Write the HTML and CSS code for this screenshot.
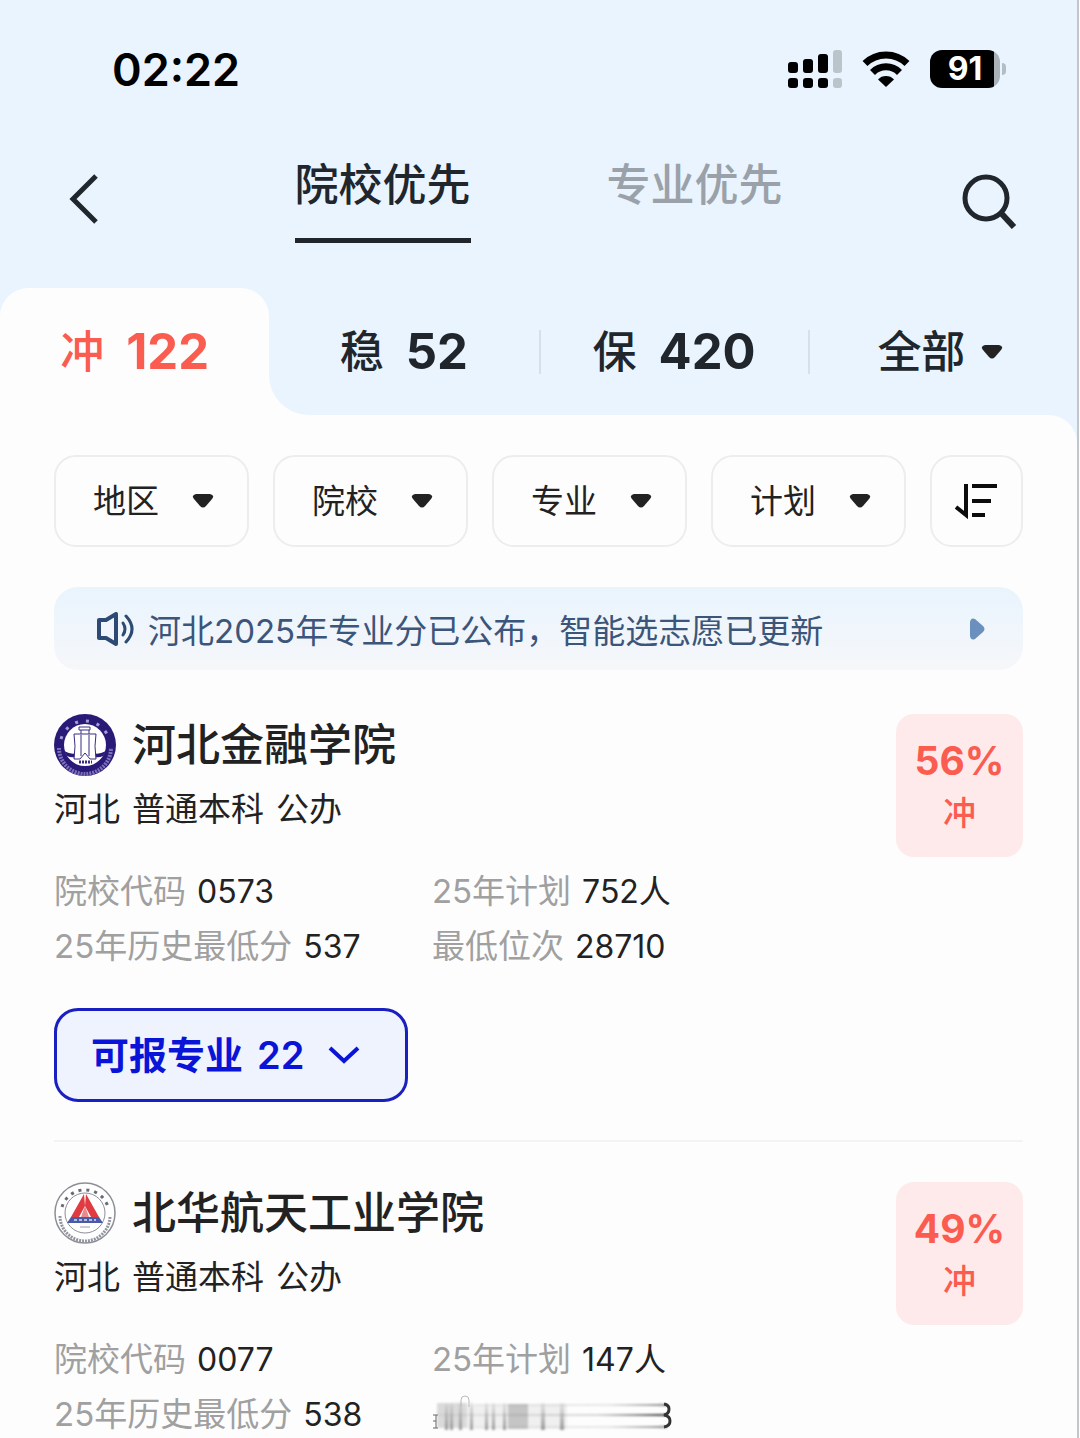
FILE: index.html
```html
<!DOCTYPE html>
<html lang="zh-CN">
<head>
<meta charset="UTF-8">
<meta name="viewport" content="width=device-width, initial-scale=1.0">
<title>智能选志愿</title>
<link rel="stylesheet" href="styles.css">
</head>
<body>
<div class="app">
    <div class="status-bar">
        <span class="time">02:22</span>
        <div class="status-icons">
            <svg class="signal" width="54" height="38" viewBox="0 0 54 38">
                <rect x="0" y="12" width="10" height="11" rx="3"/>
                <rect x="15" y="9" width="10" height="14" rx="3"/>
                <rect x="30" y="4" width="10" height="19" rx="3"/>
                <rect x="0" y="28" width="10" height="10" rx="3"/>
                <rect x="15" y="28" width="10" height="10" rx="3"/>
                <rect x="30" y="28" width="10" height="10" rx="3"/>
                <rect x="45" y="0" width="9" height="23" rx="3" fill="#b9c4cb"/>
                <rect x="45" y="28" width="9" height="10" rx="3" fill="#b9c4cb"/>
            </svg>
            <svg class="wifi" width="48" height="36" viewBox="0 0 48 36">
                <path d="M3 12.500 A30 30 0 0 1 45 12.500" fill="none" stroke="#000" stroke-width="7"/>
                <path d="M10.500 21.500 A19 19 0 0 1 37.500 21.500" fill="none" stroke="#000" stroke-width="7"/>
                <path d="M24 36 L16 28.500 A11 11 0 0 1 32 28.500 Z"/>
            </svg>
            <div class="battery"><span class="battery-level">91</span></div>
        </div>
    </div>

    <header class="nav">
        <button class="icon-btn" aria-label="返回">
            <svg width="30" height="52" viewBox="0 0 30 52"><path d="M28 3 L5 26 L28 49" fill="none" stroke="#20262c" stroke-width="5"/></svg>
        </button>
        <div class="nav-tabs">
            <button class="nav-tab active">院校优先</button>
            <button class="nav-tab">专业优先</button>
        </div>
        <button class="icon-btn search" aria-label="搜索">
            <svg width="56" height="56" viewBox="0 0 56 56" fill="none" stroke="#20262c" stroke-width="5"><circle cx="25" cy="25" r="21"/><path d="M40 40 L53 54" stroke-width="6"/></svg>
        </button>
    </header>

    <div class="levels">
        <button class="level active">冲 <b>122</b></button>
        <div class="level-rest">
            <button class="level">稳 <b>52</b></button>
            <button class="level">保 <b>420</b></button>
            <label class="level-all">
                <select aria-label="全部"><option>全部</option></select>
                <svg class="caret" width="22" height="14" viewBox="0 0 22 14"><path d="M4 0 H18 Q23 1 20 5 L14 12 Q11 15 8 12 L2 5 Q-1 1 4 0 Z"/></svg>
            </label>
        </div>
    </div>

    <main class="content">
        <div class="filters">
            <label class="filter">
                <select aria-label="地区"><option>地区</option></select>
                <svg class="caret" width="22" height="14" viewBox="0 0 22 14"><path d="M4 0 H18 Q23 1 20 5 L14 12 Q11 15 8 12 L2 5 Q-1 1 4 0 Z"/></svg>
            </label>
            <label class="filter">
                <select aria-label="院校"><option>院校</option></select>
                <svg class="caret" width="22" height="14" viewBox="0 0 22 14"><path d="M4 0 H18 Q23 1 20 5 L14 12 Q11 15 8 12 L2 5 Q-1 1 4 0 Z"/></svg>
            </label>
            <label class="filter">
                <select aria-label="专业"><option>专业</option></select>
                <svg class="caret" width="22" height="14" viewBox="0 0 22 14"><path d="M4 0 H18 Q23 1 20 5 L14 12 Q11 15 8 12 L2 5 Q-1 1 4 0 Z"/></svg>
            </label>
            <label class="filter">
                <select aria-label="计划"><option>计划</option></select>
                <svg class="caret" width="22" height="14" viewBox="0 0 22 14"><path d="M4 0 H18 Q23 1 20 5 L14 12 Q11 15 8 12 L2 5 Q-1 1 4 0 Z"/></svg>
            </label>
            <button class="sort" aria-label="排序">
                <svg width="43" height="36" viewBox="0 0 43 36" fill="none" stroke="#0c0c0c" stroke-width="4"><path d="M1 24 L11 32 V1"/><path d="M17 3 H42 M17 18 H36 M17 32 H30"/></svg>
            </button>
        </div>

        <a class="notice" href="#">
            <svg width="38" height="34" viewBox="0 0 38 34" fill="none" stroke="#2c4a74" stroke-width="4" stroke-linejoin="round" stroke-linecap="round"><path d="M3 8 H10 L20 2 V32 L10 26 H3 Z"/><path d="M27 11 Q31 17 27 23" stroke-width="3"/><path d="M30 4 Q42 17 30 30" stroke-width="3"/></svg>
            <span class="notice-text">河北2025年专业分已公布，智能选志愿已更新</span>
            <svg width="15" height="22" viewBox="0 0 15 22"><path d="M0 4 Q1 -1 5 1 L13 8 Q16 11 13 14 L5 21 Q1 23 0 18 Z" fill="#6b90bd"/></svg>
        </a>

        <article class="school">
            <div class="school-head">
                <div>
                    <h2 class="school-name">
                        <svg class="logo" viewBox="0 0 62 62">
                            <circle cx="31" cy="31" r="31" fill="#2a1a78"/>
                            <circle cx="31" cy="31" r="21" fill="#fff"/>
                            <path d="M10 37 Q18 41 22 39 V43 Q17 44 13 42 Z M52 37 Q44 41 40 39 V43 Q45 44 49 42 Z" fill="#2a1a78"/>
                            <path d="M25 13 H36 V16 H35 V20 H42 Q40 32 42 45 H36 L31 39 L26 45 H20 Q22 32 20 20 H27 V16 H25 Z" fill="#fff" stroke="#3a2c86" stroke-width="1"/>
                            <path d="M27 20 H35 M27 16 H35 M27 21 V42 M35 21 V42" fill="none" stroke="#3a2c86" stroke-width="1"/>
                            <path d="M25 48 H38" stroke="#3a2c86" stroke-width="3" stroke-dasharray="2 1"/>
                            <path d="M7 25 A25 25 0 0 1 55 25" fill="none" stroke="#a39bd6" stroke-width="3" stroke-dasharray="3 8"/>
                            <path d="M5 34 A26 26 0 0 0 57 34" fill="none" stroke="#7d73bb" stroke-width="4" stroke-dasharray="2 1"/>
                        </svg>
                        河北金融学院
                    </h2>
                    <p class="school-meta"><span>河北</span> <span>普通本科</span> <span>公办</span></p>
                </div>
                <div class="chance"><strong>56%</strong><span>冲</span></div>
            </div>
            <dl class="facts">
                <div><dt>院校代码</dt><dd>0573</dd></div>
                <div><dt>25年计划</dt><dd>752人</dd></div>
                <div><dt>25年历史最低分</dt><dd>537</dd></div>
                <div><dt>最低位次</dt><dd>28710</dd></div>
            </dl>
            <button class="majors">
                可报专业 <span>22</span>
                <svg width="32" height="20" viewBox="0 0 32 20"><path d="M2 3 L16 16 L30 3" fill="none" stroke="#0a14d8" stroke-width="4"/></svg>
            </button>
        </article>

        <article class="school">
            <div class="school-head">
                <div>
                    <h2 class="school-name">
                        <svg class="logo" viewBox="0 0 62 62">
                            <circle cx="31" cy="31" r="30" fill="#fff" stroke="#8c8f96" stroke-width="1.500"/>
                            <circle cx="31" cy="31" r="20" fill="#fff" stroke="#8c8f96" stroke-width="1"/>
                            <path d="M8 25 A24 24 0 0 1 54 25" fill="none" stroke="#666a74" stroke-width="3" stroke-dasharray="3 5"/>
                            <path d="M6 34 A25 25 0 0 0 56 34" fill="none" stroke="#92959e" stroke-width="3" stroke-dasharray="2 1"/>
                            <path d="M30 12 L17 35 H25 L31 24 Z M32 12 L45 35 H37 L31 24 Z" fill="#df3b40"/>
                            <path d="M31 24 L27 35 H35 Z" fill="#e98a8c"/>
                            <path d="M17 35 H45 L49 41 H13 Z" fill="#4b5aa6"/>
                            <path d="M20 38 H42" stroke="#b7bddc" stroke-width="2" stroke-dasharray="3 2"/>
                            <path d="M26 45 H36" stroke="#9a9da6" stroke-width="1"/>
                        </svg>
                        北华航天工业学院
                    </h2>
                    <p class="school-meta"><span>河北</span> <span>普通本科</span> <span>公办</span></p>
                </div>
                <div class="chance"><strong>49%</strong><span>冲</span></div>
            </div>
            <dl class="facts">
                <div><dt>院校代码</dt><dd>0077</dd></div>
                <div><dt>25年计划</dt><dd>147人</dd></div>
                <div><dt>25年历史最低分</dt><dd>538</dd></div>
                <div>
                    <!-- masked value -->
                    <svg class="masked" width="242" height="40" viewBox="0 0 242 40" role="img" aria-label="最低位次">
                        <defs>
                            <linearGradient id="line" x1="0" x2="1" y1="0" y2="0">
                                <stop offset="0" stop-color="#777" stop-opacity="0.100"/>
                                <stop offset="0.700" stop-color="#777" stop-opacity="0.300"/>
                                <stop offset="1" stop-color="#333"/>
                            </linearGradient>
                            <linearGradient id="bar" x1="0" x2="0" y1="0" y2="1">
                                <stop offset="0" stop-color="#888" stop-opacity="0.100"/>
                                <stop offset="1" stop-color="#888" stop-opacity="0.800"/>
                            </linearGradient>
                            <filter id="soft"><feGaussianBlur stdDeviation="1"/></filter>
                        </defs>
                        <path d="M1 20 H6 M1 33 H6 M4 20 V33 M1 26 H4" stroke="#666" stroke-width="1"/>
                        <g filter="url(#soft)">
                            <rect x="5" y="8" width="30" height="25" fill="#999" opacity="0.350"/>
                            <rect x="35" y="9" width="100" height="25" fill="#bbb" opacity="0.200"/>
                            <g fill="url(#bar)">
                                <rect x="13" y="9" width="3" height="26"/>
                                <rect x="18" y="9" width="3" height="26"/>
                                <rect x="27" y="7" width="3" height="28"/>
                                <rect x="38" y="7" width="3" height="28"/>
                                <rect x="53" y="8" width="3" height="27"/>
                                <rect x="60" y="8" width="3" height="27"/>
                                <rect x="71" y="8" width="3" height="27"/>
                                <rect x="109" y="8" width="4" height="27"/>
                                <rect x="128" y="8" width="4" height="27"/>
                            </g>
                            <rect x="76" y="9" width="20" height="25" fill="#999" opacity="0.500"/>
                            <rect x="42" y="9" width="193" height="2" fill="url(#line)" opacity="0.600"/>
                            <rect x="6" y="19" width="229" height="2" fill="url(#line)"/>
                            <rect x="42" y="31" width="193" height="2" fill="url(#line)" opacity="0.600"/>
                        </g>
                        <path d="M29 12 V5 Q29 1 33 1 Q37 1 37 5 V12" fill="none" stroke="#bbb" stroke-width="1"/>
                        <path d="M232 9 Q237 10 237 14 Q237 19 232 20 Q238 21 238 26 Q238 31 232 32" fill="none" stroke="#333" stroke-width="3"/>
                    </svg>
                </div>
            </dl>
        </article>
    </main>
</div>
</body>
</html>
```

FILE: styles.css
```css
* {
    box-sizing: border-box;
}
body {
    margin: 0;
    font-family: Inter, "Noto Sans CJK SC", sans-serif;
    font-size: 33px;
    color: #222;
    background-color: #fdfdfd;
}
button, select {
    font: inherit;
    color: inherit;
    background: none;
    border: none;
    padding: 0;
    margin: 0;
    cursor: pointer;
}
select {
    appearance: none;
}
svg {
    display: block;
    flex-shrink: 0;
}
.app {
    min-height: 100vh;
    margin-right: 1px;
    background-color: #e9f4fe;
    border-right: 2px solid #c3c7cb;
}

/* status bar */
.status-bar {
    display: flex;
    justify-content: space-between;
    align-items: center;
    height: 138px;
    padding: 0 71px 0 112px;
    color: #000;
}
.time {
    font-size: 45px;
    font-weight: 600;
}
.status-icons {
    display: flex;
    align-items: center;
    gap: 20px;
}
.battery {
    display: flex;
    align-items: center;
}
.battery-level {
    width: 70px;
    height: 38px;
    border-radius: 12px;
    background: linear-gradient(to right, #000 91%, #a9b2b9 91%);
    color: #fff;
    font-size: 32px;
    font-weight: 700;
    line-height: 38px;
    text-align: center;
}
.battery::after {
    content: "";
    width: 4px;
    height: 12px;
    margin-left: 2px;
    border-radius: 0 4px 4px 0;
    background-color: #b3bdc5;
}

/* top navigation */
.nav {
    display: flex;
    justify-content: space-between;
    height: 150px;
    padding: 14px 60px 0 68px;
    color: #20262c;
}
.icon-btn {
    align-self: flex-start;
    padding-top: 21px;
}
.nav-tabs {
    display: flex;
    align-items: flex-start;
    gap: 136px;
    padding-left: 18px;
}
.nav-tab {
    height: 91px;
    padding: 3px 0 23px;
    border-bottom: 5px solid transparent;
    font-size: 44px;
    font-weight: 500;
    line-height: 60px;
    color: #9aa1a8;
}
.nav-tab.active {
    color: #20262c;
    border-bottom-color: #20262c;
}

/* risk levels */
.levels {
    display: grid;
    grid-template-columns: 1fr 3fr;
    height: 127px;
    background: linear-gradient(#e9f4fe 50%, #fdfdfd 50%);
    font-size: 44px;
    font-weight: 500;
    color: #20262c;
}
.level-rest {
    display: grid;
    grid-template-columns: repeat(3, 1fr);
    align-items: center;
    background-color: #e9f4fe;
    border-bottom-left-radius: 40px;
}
.level {
    display: flex;
    justify-content: center;
    align-items: center;
    gap: 22px;
    height: 44px;
    line-height: 44px;
}
.level b {
    font-size: 49px;
    font-weight: 700;
}
.level + .level {
    border-left: 2px solid #d5e0ea;
}
.level.active {
    height: auto;
    background-color: #fdfdfd;
    border-radius: 28px 28px 0 0;
    color: #fb5c50;
}
.level-all {
    display: flex;
    justify-content: center;
    align-items: center;
    gap: 16px;
    height: 44px;
    padding-right: 6px;
    border-left: 2px solid #d5e0ea;
}
.caret {
    fill: #222;
    pointer-events: none;
}

/* list */
.content {
    padding: 40px 54px 0;
    background-color: #fdfdfd;
    border-top-right-radius: 28px;
}
.filters {
    display: grid;
    grid-template-columns: repeat(4, 1fr) 93px;
    gap: 24px;
    height: 92px;
}
.filter, .sort {
    display: grid;
    align-items: center;
    border: 2px solid #ededed;
    border-radius: 22px;
}
.sort {
    justify-content: center;
}
.filter select, .filter .caret {
    grid-area: 1 / 1;
}
.filter select {
    height: 100%;
    padding-left: 37px;
}
.filter .caret {
    justify-self: end;
    margin-right: 33px;
}
.notice {
    display: flex;
    align-items: center;
    gap: 14px;
    height: 83px;
    margin-top: 40px;
    padding: 0 38px 0 42px;
    border-radius: 24px;
    background: linear-gradient(#e9f4fe, #f6f7f9);
    color: #3c557a;
    text-decoration: none;
}
.notice-text {
    flex: 1;
}
.school {
    padding: 40px 0 38px;
    border-bottom: 2px solid #f4f4f4;
}
.notice + .school {
    padding-top: 44px;
}
.school:last-child {
    padding-bottom: 0;
    border-bottom: none;
}
.school-head {
    display: flex;
    justify-content: space-between;
    align-items: flex-start;
    height: 118px;
}
.school-name {
    display: flex;
    align-items: center;
    gap: 16px;
    margin: 0;
    font-size: 44px;
    font-weight: 500;
    line-height: 62px;
}
.logo {
    width: 62px;
    height: 62px;
}
.school-meta {
    display: flex;
    gap: 12px;
    margin: 9px 0 0;
    line-height: 48px;
}
.chance {
    display: flex;
    flex-direction: column;
    align-items: center;
    width: 127px;
    height: 143px;
    padding-top: 21px;
    border-radius: 18px;
    background-color: #feeaea;
    color: #fb5c50;
    font-weight: 500;
    line-height: 52px;
}
.chance strong {
    font-size: 39px;
    font-weight: 700;
}
.facts {
    display: grid;
    grid-template-columns: 39% 1fr;
    margin: 32px 0 0;
    line-height: 55px;
}
.facts div {
    display: flex;
    align-items: center;
    gap: 11px;
}
.facts dt {
    color: #a0a0a0;
}
.facts dd {
    margin: 0;
    font-size: 32px;
}
.majors {
    display: flex;
    align-items: center;
    gap: 14px;
    height: 94px;
    margin-top: 34px;
    padding: 0 45px 0 34px;
    border: 3px solid #1a20c0;
    border-radius: 24px;
    background-color: #eff3fd;
    color: #0a14d8;
    font-size: 38px;
    font-weight: 600;
    line-height: 84px;
}
.majors svg {
    margin-left: 10px;
}
```
